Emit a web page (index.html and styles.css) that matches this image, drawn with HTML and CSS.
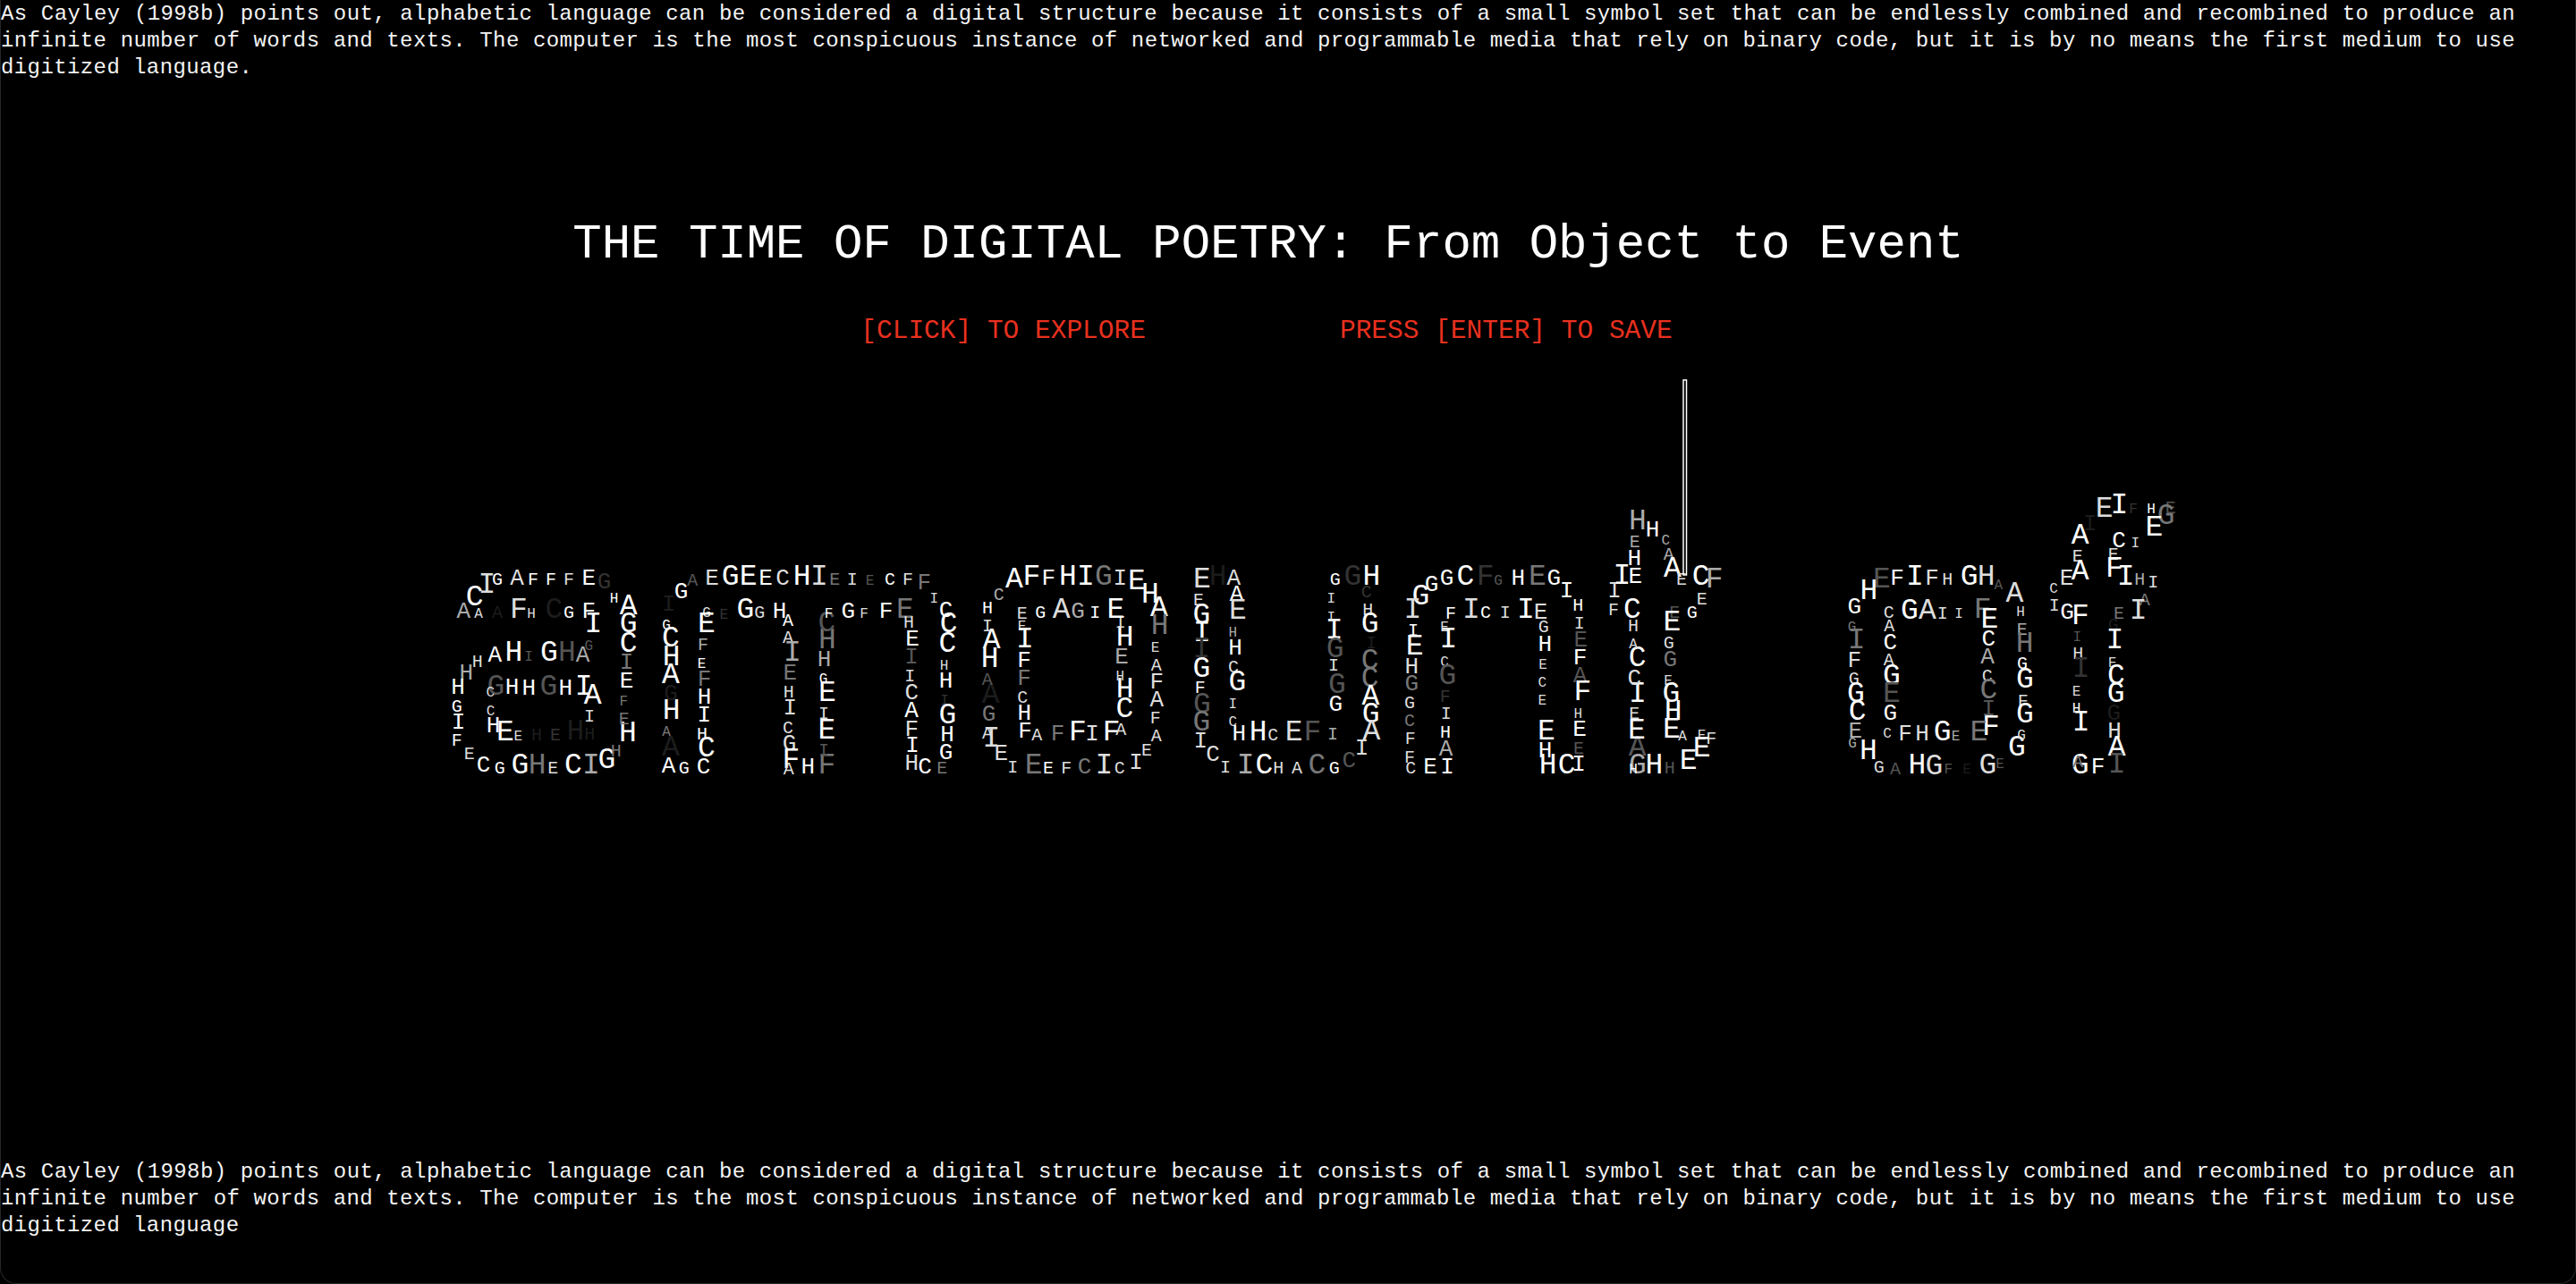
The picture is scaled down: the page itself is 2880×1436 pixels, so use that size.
FILE: index.html
```html
<!DOCTYPE html>
<html lang="en">
<head>
<meta charset="utf-8">
<title>The Time of Digital Poetry</title>
<link rel="stylesheet" href="styles.css">
</head>
<body>
<div class="page">
<p class="para">As Cayley (1998b) points out, alphabetic language can be considered a digital structure because it consists of a small symbol set that can be endlessly combined and recombined to produce an infinite number of words and texts. The computer is the most conspicuous instance of networked and programmable media that rely on binary code, but it is by no means the first medium to use digitized language.</p>
<h1 class="title">THE TIME OF DIGITAL POETRY: From Object to Event</h1>
<div class="hints"><span>[CLICK] TO EXPLORE</span><span>PRESS [ENTER] TO SAVE</span></div>
<svg class="canvas" width="2880" height="1436" viewBox="0 0 2880 1436">
<g transform="translate(490 600) scale(.33333)">
<text class="x a" x="163" y="190">I</text><text class="x" x="122" y="232">C</text><text class="m" x="198" y="163">G</text><text class="l a" x="264" y="163">A</text><text class="m" x="318" y="163">F</text><text class="m" x="378" y="163">F</text><text class="m a" x="438" y="163">F</text><text class="l" x="505" y="162">E</text><text class="l e" x="557" y="175">G</text><text class="s" x="590" y="222">H</text>
<text class="l b" x="85" y="272">A</text><text class="s a" x="135" y="272">A</text><text class="m f" x="198" y="272">A</text><text class="x a" x="270" y="272">F</text><text class="s a" x="312" y="272">H</text><text class="x f" x="388" y="272">C</text><text class="m" x="438" y="272">G</text><text class="l" x="505" y="272">F</text><text class="x" x="520" y="320">I</text><text class="x" x="638" y="260">A</text><text class="x" x="638" y="320">G</text><text class="x" x="638" y="388">C</text>
<text class="s d" x="505" y="382">G</text><text class="l b" x="485" y="420">A</text><text class="x d" x="432" y="418">H</text><text class="x" x="372" y="418">G</text><text class="s d" x="303" y="418">I</text><text class="x" x="253" y="418">H</text><text class="l" x="190" y="420">A</text><text class="m a" x="131" y="437">H</text><text class="l b" x="94" y="480">H</text><text class="l" x="66" y="528">H</text><text class="m" x="62" y="588">G</text><text class="l" x="68" y="645">I</text><text class="m" x="62" y="703">F</text><text class="m a" x="104" y="748">E</text><text class="l" x="152" y="790">C</text><text class="m" x="206" y="795">G</text><text class="x" x="274" y="795">G</text><text class="x c" x="332" y="795">H</text><text class="m a" x="385" y="795">E</text><text class="x" x="453" y="795">C</text><text class="x b" x="513" y="795">I</text><text class="x" x="565" y="778">G</text><text class="m c" x="596" y="737">H</text><text class="x" x="636" y="688">H</text><text class="m c" x="623" y="630">E</text><text class="s c" x="622" y="568">F</text><text class="l" x="632" y="507">E</text><text class="l c" x="632" y="445">I</text>
<text class="x d" x="193" y="530">G</text><text class="s a" x="175" y="538">C</text><text class="l" x="248" y="528">H</text><text class="l" x="304" y="530">H</text><text class="x d" x="370" y="530">G</text><text class="l" x="427" y="530">H</text><text class="x" x="488" y="530">I</text><text class="x" x="518" y="562">A</text><text class="m a" x="507" y="620">I</text><text class="s a" x="176" y="600">C</text><text class="l" x="185" y="658">H</text><text class="x" x="225" y="683">E</text><text class="s a" x="268" y="685">E</text><text class="m f" x="330" y="685">H</text><text class="m e" x="393" y="685">E</text><text class="x f" x="460" y="680">H</text><text class="m f" x="508" y="680">H</text>
<text class="l f" x="773" y="250">I</text><text class="l" x="815" y="208">G</text><text class="m d" x="853" y="166">A</text><text class="l a" x="918" y="163">E</text><text class="x" x="980" y="163">G</text><text class="x" x="1040" y="163">E</text><text class="l" x="1098" y="163">E</text><text class="l a" x="1155" y="163">C</text><text class="x" x="1220" y="163">H</text><text class="x a" x="1278" y="163">I</text><text class="m c" x="1330" y="163">E</text><text class="m a" x="1388" y="163">I</text><text class="s d" x="1448" y="163">E</text>
<text class="s a" x="900" y="270">G</text><text class="x" x="900" y="320">E</text><text class="s e" x="958" y="275">E</text><text class="x" x="1030" y="272">G</text><text class="m a" x="1078" y="272">G</text><text class="l" x="1145" y="272">H</text><text class="m" x="1173" y="300">A</text><text class="m a" x="1173" y="358">A</text><text class="x b" x="1188" y="418">I</text><text class="l c" x="1180" y="480">E</text><text class="m a" x="1175" y="540">H</text><text class="l a" x="1180" y="598">I</text><text class="m a" x="1173" y="660">C</text><text class="l a" x="1178" y="718">G</text><text class="x" x="1183" y="778">F</text><text class="m a" x="1175" y="798">A</text><text class="l" x="1240" y="795">H</text><text class="x c" x="1303" y="795">F</text><text class="m d" x="1293" y="735">I</text><text class="x" x="1303" y="677">E</text><text class="m a" x="1293" y="612">I</text><text class="x" x="1305" y="553">E</text><text class="s" x="1292" y="492">G</text><text class="l b" x="1295" y="435">H</text><text class="x c" x="1305" y="375">H</text><text class="x d" x="1303" y="318">C</text><text class="s" x="1310" y="272">F</text><text class="l" x="1375" y="272">G</text><text class="s a" x="1428" y="272">F</text><text class="l" x="1502" y="272">F</text>
<text class="s" x="765" y="312">G</text><text class="x" x="780" y="370">C</text><text class="x" x="782" y="432">H</text><text class="x" x="780" y="492">A</text><text class="l f" x="780" y="550">G</text><text class="x" x="782" y="612">H</text><text class="s c" x="765" y="668">A</text><text class="x f" x="780" y="735">A</text><text class="l" x="773" y="792">A</text><text class="m" x="824" y="795">G</text><text class="l" x="890" y="795">C</text><text class="x" x="900" y="738">C</text><text class="m" x="885" y="680">H</text><text class="l" x="892" y="620">I</text><text class="l" x="893" y="560">H</text><text class="l c" x="893" y="500">F</text><text class="s" x="884" y="442">E</text><text class="m b" x="888" y="380">F</text>
</g>
<g transform="translate(990 600) scale(.33333)">
<text class="m" x="15" y="163">C</text><text class="m a" x="75" y="163">F</text><text class="l c" x="130" y="178">F</text><text class="s a" x="163" y="222">I</text><text class="x c" x="66" y="272">E</text><text class="m a" x="78" y="305">H</text><text class="l" x="90" y="365">E</text><text class="l d" x="87" y="425">I</text><text class="m a" x="82" y="485">I</text><text class="l a" x="88" y="545">C</text><text class="l" x="87" y="607">A</text><text class="l a" x="88" y="668">F</text><text class="l" x="90" y="722">I</text><text class="l a" x="88" y="782">H</text><text class="l" x="132" y="795">C</text><text class="m c" x="190" y="795">E</text><text class="l" x="203" y="270">C</text><text class="x" x="212" y="322">C</text><text class="x" x="208" y="388">C</text><text class="s a" x="197" y="447">H</text><text class="l" x="203" y="508">H</text><text class="s e" x="198" y="565">I</text><text class="x" x="208" y="627">G</text><text class="l" x="207" y="688">H</text><text class="l" x="203" y="748">G</text>
<text class="m" x="342" y="258">H</text><text class="m b" x="380" y="212">C</text><text class="x" x="432" y="170">A</text><text class="x" x="490" y="163">F</text><text class="l" x="547" y="163">F</text><text class="x" x="612" y="163">H</text><text class="x" x="672" y="163">I</text><text class="x c" x="732" y="163">G</text><text class="l a" x="787" y="163">I</text><text class="x" x="843" y="178">E</text><text class="x" x="888" y="222">H</text><text class="x" x="918" y="268">A</text><text class="x c" x="920" y="328">H</text><text class="s a" x="905" y="388">E</text><text class="m a" x="908" y="450">A</text><text class="l a" x="910" y="510">F</text><text class="l a" x="910" y="570">A</text><text class="m a" x="905" y="628">F</text><text class="m a" x="908" y="688">A</text><text class="m a" x="876" y="735">E</text><text class="l a" x="840" y="780">I</text><text class="m a" x="785" y="795">C</text><text class="x a" x="733" y="795">I</text><text class="l c" x="668" y="795">C</text><text class="m a" x="607" y="795">F</text><text class="m" x="546" y="795">E</text><text class="x c" x="497" y="795">E</text><text class="m a" x="427" y="792">I</text><text class="l a" x="388" y="750">E</text><text class="x a" x="355" y="705">I</text><text class="m a" x="342" y="678">A</text><text class="l c" x="347" y="617">G</text><text class="x f" x="353" y="558">A</text><text class="m d" x="341" y="497">A</text><text class="x" x="350" y="437">H</text><text class="x" x="356" y="375">A</text><text class="m a" x="342" y="318">I</text>
<text class="m a" x="458" y="275">E</text><text class="s a" x="458" y="315">E</text><text class="x" x="468" y="372">I</text><text class="l" x="465" y="437">F</text><text class="l c" x="465" y="497">F</text><text class="m a" x="460" y="557">C</text><text class="l" x="466" y="615">H</text><text class="l" x="468" y="675">F</text><text class="m a" x="508" y="685">A</text><text class="l c" x="578" y="685">F</text><text class="x" x="645" y="685">F</text><text class="l a" x="693" y="685">I</text><text class="x" x="758" y="685">F</text><text class="m a" x="790" y="665">A</text><text class="x" x="802" y="605">C</text><text class="x" x="803" y="540">H</text><text class="s a" x="787" y="482">H</text><text class="l b" x="792" y="427">E</text><text class="x" x="803" y="365">H</text><text class="m a" x="788" y="305">I</text><text class="x" x="772" y="273">E</text><text class="m" x="703" y="273">I</text><text class="l b" x="645" y="273">G</text><text class="x a" x="590" y="273">A</text><text class="m" x="520" y="273">G</text>
<text class="x a" x="1062" y="170">E</text><text class="x f" x="1115" y="163">H</text><text class="l a" x="1168" y="163">A</text><text class="l" x="1178" y="215">A</text><text class="m a" x="1050" y="232">E</text><text class="x a" x="1182" y="275">E</text><text class="x" x="1060" y="290">G</text><text class="s b" x="1165" y="335">H</text><text class="l" x="1173" y="397">H</text><text class="x" x="1062" y="350">I</text><text class="x e" x="1060" y="405">I</text><text class="x" x="1060" y="470">G</text><text class="m a" x="1167" y="455">C</text><text class="x" x="1180" y="515">G</text><text class="m" x="1055" y="525">F</text><text class="x d" x="1062" y="590">G</text><text class="x c" x="1060" y="650">G</text><text class="s a" x="1165" y="575">I</text><text class="s a" x="1165" y="635">C</text><text class="l a" x="1057" y="708">I</text><text class="l a" x="1098" y="752">C</text><text class="m a" x="1140" y="792">I</text><text class="l" x="1186" y="685">H</text><text class="x" x="1250" y="685">H</text><text class="m a" x="1300" y="685">C</text><text class="x a" x="1370" y="685">E</text><text class="x d" x="1432" y="685">F</text><text class="x b" x="1208" y="795">I</text><text class="x" x="1270" y="795">C</text><text class="m a" x="1318" y="795">H</text><text class="m a" x="1380" y="795">A</text><text class="x c" x="1447" y="795">C</text>
</g>
<g transform="translate(1490 600) scale(.33333)">
<text class="m" x="8" y="163">G</text><text class="x e" x="67" y="163">G</text><text class="x" x="130" y="163">H</text><text class="m e" x="113" y="205">C</text><text class="m a" x="118" y="265">H</text><text class="x" x="125" y="322">G</text><text class="m f" x="130" y="375">I</text><text class="x c" x="125" y="445">C</text><text class="x c" x="125" y="505">C</text><text class="x" x="127" y="565">A</text><text class="x" x="128" y="625">G</text><text class="x a" x="130" y="682">A</text><text class="l a" x="98" y="732">I</text><text class="l d" x="55" y="775">C</text><text class="m" x="5" y="795">G</text><text class="x" x="5" y="343">I</text><text class="x d" x="8" y="405">G</text><text class="m a" x="3" y="450">I</text><text class="x d" x="15" y="525">G</text><text class="l" x="10" y="585">G</text><text class="m b" x="0" y="680">I</text><text class="s a" x="-5" y="222">I</text><text class="s a" x="-5" y="285">I</text>
<text class="l" x="332" y="182">G</text><text class="x" x="295" y="228">G</text><text class="l" x="383" y="163">G</text><text class="x" x="445" y="163">C</text><text class="x e" x="512" y="163">F</text><text class="s d" x="555" y="163">G</text><text class="l" x="622" y="163">H</text><text class="x c" x="687" y="163">E</text><text class="l" x="742" y="163">G</text><text class="l" x="785" y="205">I</text><text class="m" x="823" y="250">H</text><text class="m a" x="827" y="308">I</text><text class="l d" x="832" y="370">E</text><text class="l" x="830" y="430">F</text><text class="l d" x="830" y="490">A</text><text class="x" x="838" y="548">F</text><text class="s a" x="823" y="608">H</text><text class="l" x="828" y="668">E</text><text class="m d" x="825" y="730">E</text><text class="l" x="825" y="787">I</text><text class="x" x="785" y="795">C</text><text class="x" x="722" y="795">H</text><text class="l" x="713" y="742">H</text><text class="x" x="717" y="682">E</text><text class="s a" x="703" y="565">E</text><text class="s a" x="703" y="503">C</text><text class="s a" x="705" y="445">E</text><text class="l" x="712" y="385">H</text><text class="m a" x="707" y="322">G</text><text class="l a" x="698" y="275">E</text><text class="x" x="648" y="272">I</text><text class="m a" x="578" y="273">I</text><text class="m" x="513" y="273">C</text><text class="x a" x="465" y="273">I</text><text class="m" x="396" y="275">F</text><text class="s a" x="375" y="318">E</text><text class="x" x="388" y="372">I</text><text class="s a" x="375" y="435">C</text><text class="x d" x="385" y="495">G</text><text class="m e" x="377" y="555">F</text><text class="m a" x="380" y="612">I</text><text class="m" x="378" y="675">H</text><text class="l b" x="380" y="735">A</text><text class="l" x="384" y="795">I</text><text class="l" x="327" y="795">E</text><text class="m a" x="262" y="795">C</text><text class="m a" x="258" y="760">F</text><text class="m a" x="260" y="695">F</text><text class="m c" x="258" y="637">C</text><text class="m a" x="258" y="575">G</text><text class="l c" x="265" y="515">G</text><text class="l a" x="265" y="458">H</text><text class="x" x="275" y="395">E</text><text class="m" x="270" y="332">I</text><text class="x a" x="268" y="272">I</text>
<text class="x b" x="1023" y="-25">H</text><text class="l" x="1073" y="0">H</text><text class="m b" x="1013" y="35">E</text><text class="l" x="1012" y="95">H</text><text class="s b" x="1117" y="27">C</text><text class="m b" x="1127" y="78">A</text><text class="x" x="1140" y="135">A</text><text class="m a" x="1170" y="162">E</text><text class="x" x="1235" y="162">C</text><text class="x b" x="1280" y="172">F</text><text class="m a" x="1238" y="228">E</text><text class="m" x="1205" y="272">G</text><text class="m d" x="1147" y="272">E</text><text class="x" x="1138" y="315">E</text><text class="m a" x="1127" y="375">G</text><text class="l c" x="1132" y="435">G</text><text class="s a" x="1125" y="497">E</text><text class="x" x="1135" y="555">G</text><text class="x" x="1142" y="615">H</text><text class="x" x="1137" y="675">E</text><text class="s a" x="1173" y="685">A</text><text class="s a" x="1238" y="680">E</text><text class="m a" x="1270" y="695">F</text><text class="x" x="1238" y="738">E</text><text class="x" x="1193" y="780">E</text><text class="m d" x="1130" y="795">H</text><text class="x" x="1078" y="795">H</text><text class="x b" x="1023" y="795">G</text><text class="s" x="1008" y="795">H</text><text class="x d" x="1022" y="735">A</text><text class="x" x="1020" y="678">E</text><text class="m a" x="1012" y="612">E</text><text class="x" x="1023" y="555">I</text><text class="l a" x="1012" y="497">C</text><text class="x" x="1022" y="435">C</text><text class="s a" x="1008" y="375">A</text><text class="m a" x="1008" y="317">H</text><text class="x" x="1005" y="272">C</text><text class="m a" x="942" y="263">F</text><text class="l a" x="945" y="205">I</text><text class="x" x="970" y="160">I</text><text class="l" x="1015" y="155">E</text>
</g>
<g transform="translate(1980 530) scale(.33333)">
<text class="x a" x="1118" y="145">E</text><text class="x" x="1168" y="132">I</text><text class="s e" x="1215" y="132">F</text><text class="s" x="1275" y="132">H</text><text class="m d" x="1340" y="132">E</text><text class="x c" x="1325" y="168">G</text><text class="x" x="1285" y="208">E</text><text class="l f" x="1070" y="188">I</text><text class="x" x="1037" y="235">A</text><text class="l" x="1167" y="245">C</text><text class="s a" x="1222" y="245">I</text><text class="m a" x="1028" y="295">E</text><text class="m a" x="1148" y="288">E</text><text class="x" x="1152" y="345">F</text><text class="x" x="1037" y="355">A</text><text class="l a" x="992" y="372">E</text><text class="x" x="1190" y="372">I</text><text class="m b" x="1237" y="372">H</text><text class="m a" x="1282" y="382">I</text><text class="s a" x="948" y="400">C</text><text class="m c" x="1253" y="440">A</text><text class="m a" x="950" y="458">I</text><text class="l" x="993" y="485">G</text><text class="x" x="1038" y="503">F</text><text class="m c" x="1167" y="485">E</text><text class="x a" x="1232" y="485">I</text><text class="m f" x="1148" y="525">G</text><text class="x" x="1153" y="585">I</text><text class="s d" x="1027" y="562">I</text><text class="m a" x="1030" y="620">H</text><text class="s a" x="1145" y="648">F</text><text class="x e" x="1040" y="680">I</text><text class="x" x="1158" y="705">C</text><text class="x" x="1157" y="765">G</text><text class="s a" x="1025" y="743">E</text><text class="s" x="1025" y="800">H</text><text class="l f" x="1150" y="825">G</text><text class="x" x="1040" y="860">I</text><text class="l a" x="1152" y="885">H</text><text class="x" x="1160" y="945">A</text><text class="x d" x="1160" y="1003">I</text><text class="l" x="1097" y="1005">F</text><text class="x" x="1037" y="1005">G</text><text class="m c" x="1030" y="985">A</text>
<text class="x d" x="372" y="382">E</text><text class="x" x="328" y="420">H</text><text class="l" x="423" y="372">F</text><text class="x" x="483" y="372">I</text><text class="l a" x="540" y="372">F</text><text class="m a" x="592" y="372">H</text><text class="x" x="665" y="372">G</text><text class="x a" x="722" y="372">H</text><text class="s d" x="763" y="388">A</text><text class="x a" x="817" y="430">A</text><text class="l" x="280" y="468">G</text><text class="m a" x="395" y="483">C</text><text class="x" x="465" y="485">G</text><text class="x a" x="525" y="485">A</text><text class="m a" x="575" y="485">I</text><text class="s a" x="630" y="483">I</text><text class="x c" x="710" y="483">F</text><text class="x" x="733" y="515">E</text><text class="s a" x="837" y="478">H</text><text class="m b" x="842" y="540">E</text><text class="m a" x="397" y="527">A</text><text class="s c" x="272" y="527">G</text><text class="x c" x="287" y="585">I</text><text class="l" x="400" y="587">C</text><text class="l" x="730" y="575">C</text><text class="x c" x="851" y="598">H</text><text class="l b" x="726" y="635">A</text><text class="l a" x="280" y="648">F</text><text class="m a" x="395" y="642">A</text><text class="m" x="843" y="655">G</text><text class="x" x="405" y="705">G</text><text class="m a" x="725" y="695">C</text><text class="m a" x="278" y="705">G</text><text class="x" x="852" y="718">G</text><text class="x" x="285" y="765">G</text><text class="x d" x="405" y="765">E</text><text class="x c" x="730" y="752">C</text><text class="m a" x="845" y="780">F</text><text class="x" x="290" y="825">C</text><text class="l" x="400" y="825">G</text><text class="l d" x="730" y="810">I</text><text class="x" x="852" y="835">G</text><text class="x" x="738" y="875">F</text><text class="l b" x="283" y="885">E</text><text class="x c" x="697" y="895">E</text><text class="s a" x="390" y="885">C</text><text class="l a" x="450" y="895">F</text><text class="l a" x="507" y="895">H</text><text class="x" x="575" y="895">G</text><text class="s b" x="620" y="895">E</text><text class="s b" x="273" y="917">G</text><text class="x" x="327" y="958">H</text><text class="m a" x="362" y="1003">G</text><text class="m d" x="417" y="1008">A</text><text class="x" x="490" y="1005">H</text><text class="x a" x="547" y="1008">G</text><text class="s d" x="595" y="1005">F</text><text class="s f" x="657" y="1005">E</text><text class="x a" x="727" y="1005">G</text><text class="s d" x="768" y="988">E</text><text class="x" x="825" y="945">G</text><text class="s a" x="840" y="890">G</text>
</g>
<rect class="bar" x="1882" y="425" width="3.5" height="218"></rect>
</svg>
<p class="para para-bottom">As Cayley (1998b) points out, alphabetic language can be considered a digital structure because it consists of a small symbol set that can be endlessly combined and recombined to produce an infinite number of words and texts. The computer is the most conspicuous instance of networked and programmable media that rely on binary code, but it is by no means the first medium to use digitized language</p>
</div>
</body>
</html>
```
FILE: styles.css
```css
html, body { margin: 0; background: #000; }
.page {
  position: relative;
  box-sizing: border-box;
  width: 2880px;
  height: 1436px;
  display: flex;
  flex-direction: column;
  padding-top: 1px;
  background: #000;
  color: #fff;
  border: 1px solid #262626;
  border-top: 0;
  border-radius: 0 0 18px 18px;
  font-family: "Liberation Mono", "DejaVu Sans Mono", monospace;
  overflow: hidden;
}
.para {
  margin: 0;
  width: 2811px;
  color: #f4f4f4;
  font-size: 24px;
  letter-spacing: 0.4px;
  line-height: 30px;
  text-align: justify;
}
.para-bottom { margin-top: auto; margin-bottom: 49px; }
.title {
  margin: 151px 0 0;
  text-align: center;
  padding-right: 44px;
  font-size: 54px;
  font-weight: 400;
  line-height: 64px;
}
.hints {
  display: flex;
  justify-content: center;
  gap: 217px;
  margin-top: 46px;
  padding-right: 48px;
  color: #e8301f;
  font-size: 29.5px;
  line-height: 36px;
}
.canvas { position: absolute; top: 0; left: -1px; }
.canvas text {
  text-anchor: middle;
  fill: #fff;
  font-family: "Liberation Mono", monospace;
}
.canvas .s { font-size: 48px; }
.canvas .m { font-size: 60px; }
.canvas .l { font-size: 78px; }
.canvas .x { font-size: 99px; }
.canvas .a { fill: #ddd; }
.canvas .b { fill: #aaa; }
.canvas .c { fill: #777; }
.canvas .d { fill: #555; }
.canvas .e { fill: #333; }
.canvas .f { fill: #1c1c1c; }
.bar { fill: none; stroke: #fff; stroke-width: 1.5; }
```
